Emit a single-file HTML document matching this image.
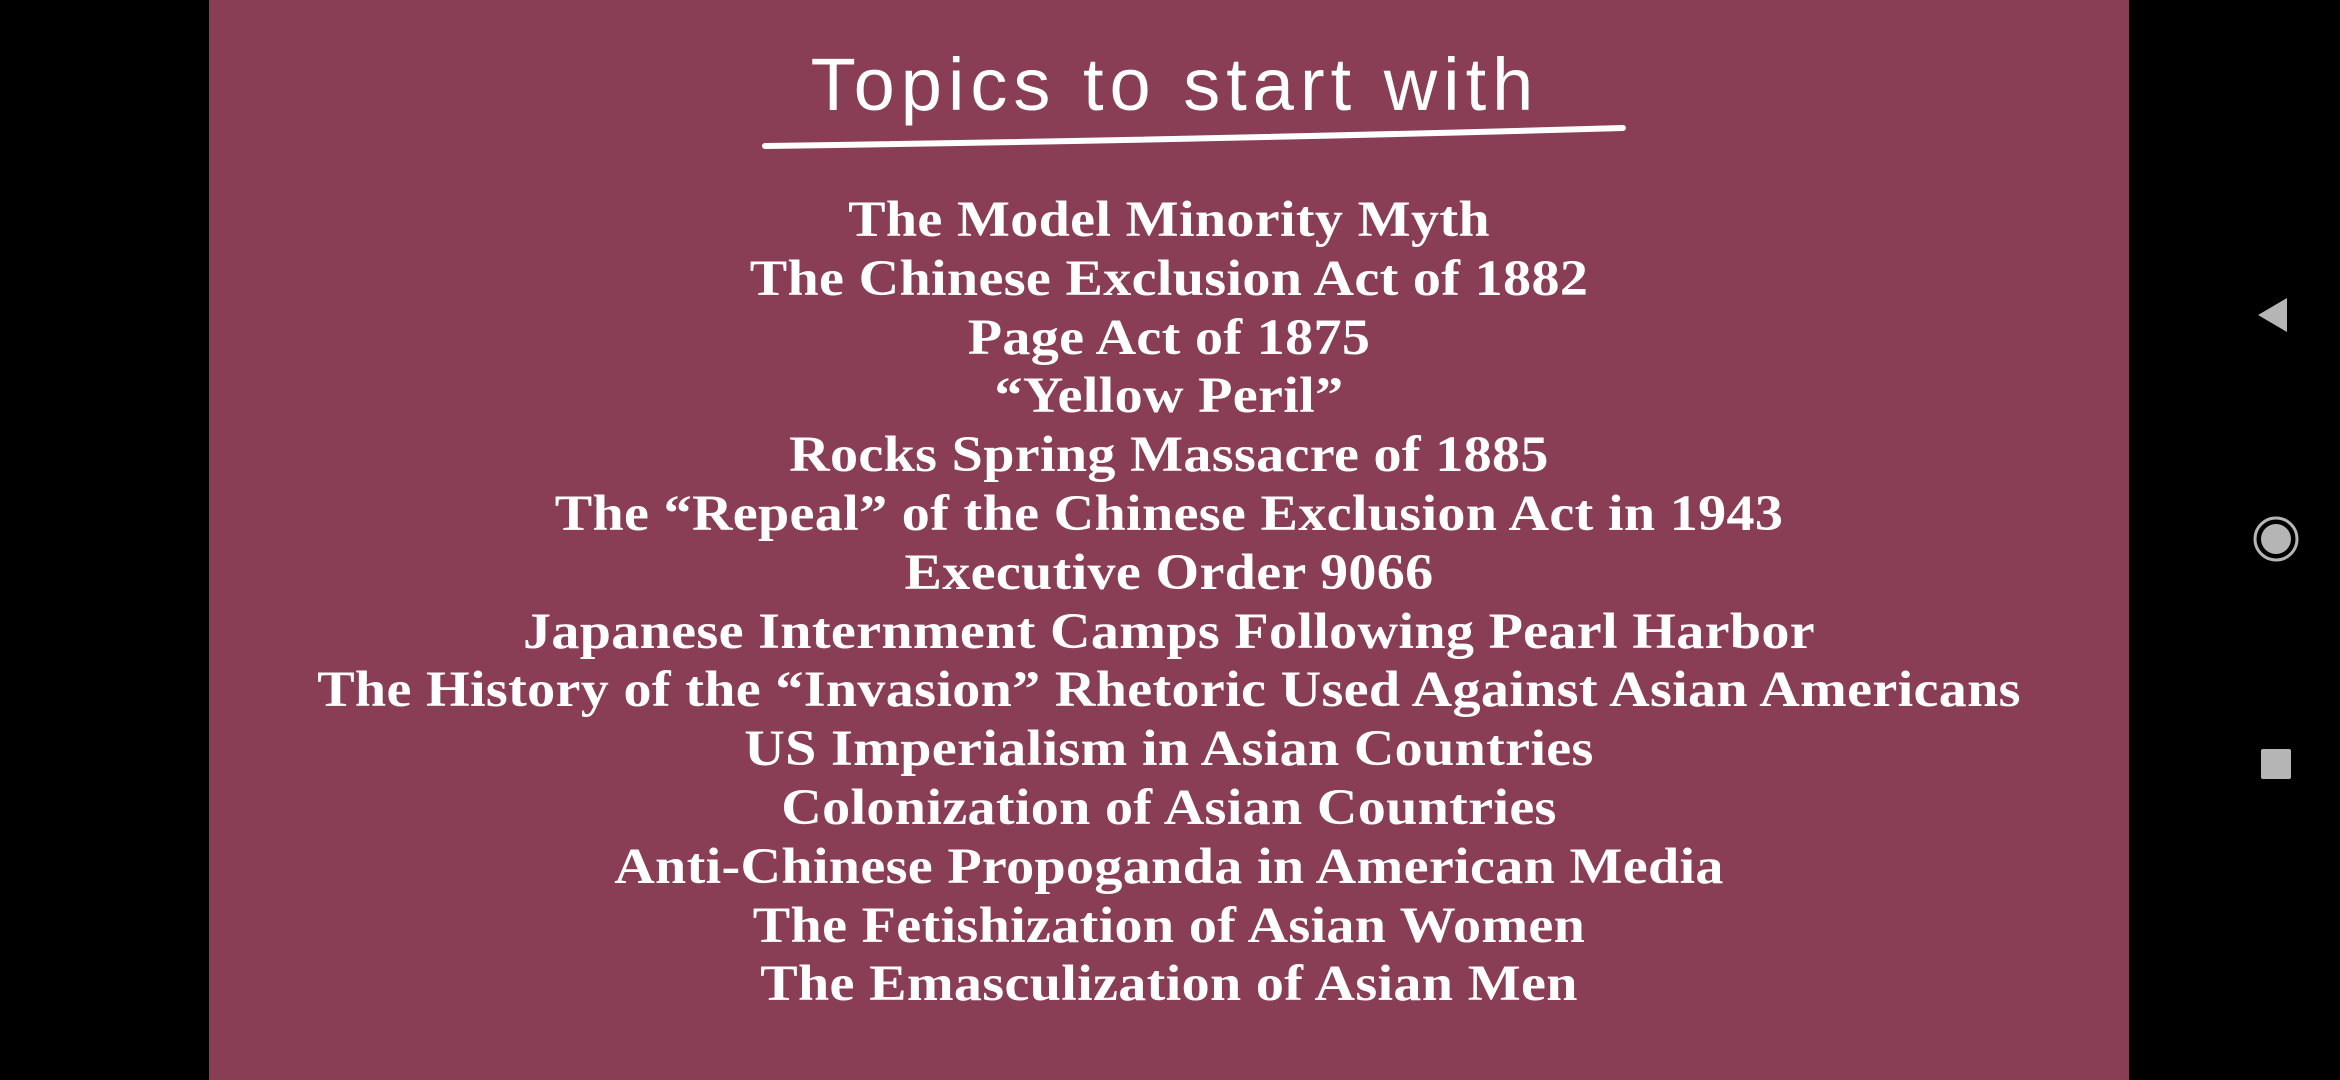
<!DOCTYPE html>
<html><head><meta charset="utf-8"><style>
html,body{margin:0;padding:0;background:#000;width:2340px;height:1080px;overflow:hidden}
.panel{position:absolute;left:209px;top:0;width:1920px;height:1080px;background:#893e56}
.title{position:absolute;left:800px;top:42px;width:750px;text-align:center;font-family:"Liberation Sans",sans-serif;font-weight:normal;font-size:74px;letter-spacing:6px;color:#fff}
.list{position:absolute;left:109px;top:191px;width:2120px;text-align:center;font-family:"Liberation Serif",serif;font-weight:bold;font-size:51px;line-height:58.8px;color:#fff;letter-spacing:0.3px;transform:scaleX(1.1);transform-origin:1060px 0}
</style></head><body>
<div class="panel"></div>
<div class="title">Topics to start with</div>
<svg style="position:absolute;left:0;top:0" width="2340" height="1080">
<path d="M765 146 Q1200 140 1623 128" stroke="#fff" stroke-width="6" fill="none" stroke-linecap="round"/>
<path d="M2287 298 L2287 332 L2258 315 Z" fill="#b5b5b5"/>
<circle cx="2276" cy="539" r="21" fill="none" stroke="#b5b5b5" stroke-width="3"/>
<circle cx="2276" cy="539" r="15" fill="#b5b5b5"/>
<rect x="2261" y="749" width="30" height="30" rx="2" fill="#b5b5b5"/>
</svg>
<div class="list">
The Model Minority Myth<br>
The Chinese Exclusion Act of 1882<br>
Page Act of 1875<br>
“Yellow Peril”<br>
Rocks Spring Massacre of 1885<br>
The “Repeal” of the Chinese Exclusion Act in 1943<br>
Executive Order 9066<br>
Japanese Internment Camps Following Pearl Harbor<br>
The History of the “Invasion” Rhetoric Used Against Asian Americans<br>
US Imperialism in Asian Countries<br>
Colonization of Asian Countries<br>
Anti-Chinese Propoganda in American Media<br>
The Fetishization of Asian Women<br>
The Emasculization of Asian Men
</div>
</body></html>
